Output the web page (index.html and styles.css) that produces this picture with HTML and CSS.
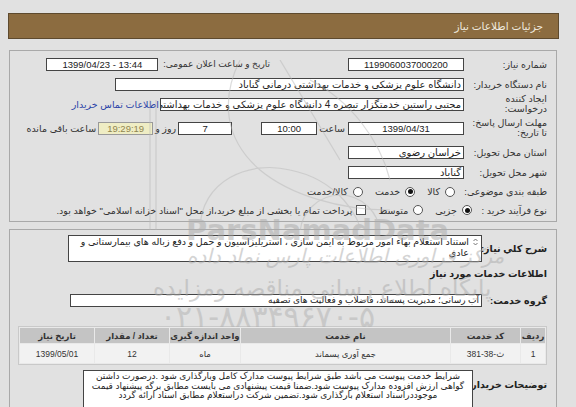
FILE: index.html
```html
<!DOCTYPE html>
<html lang="fa">
<head>
<meta charset="utf-8">
<title>جزئیات اطلاعات نیاز</title>
<link rel="stylesheet" href="styles.css">
</head>
<body>
<div class="page" dir="rtl">
  <div class="title-bar">جزئیات اطلاعات نیاز</div>

  <div class="panel panel-main">
    <div class="row r20">
      <div class="lbl">شماره نیاز:</div>
      <div class="box w114 center num">1199060037000200</div>
      <div class="lbl lbl-date">تاریخ و ساعت اعلان عمومی:</div>
      <div class="box w110 center num" dir="ltr">1399/04/23 - 13:44</div>
    </div>
    <div class="row r20">
      <div class="lbl">نام دستگاه خریدار:</div>
      <div class="box w347">دانشگاه علوم پزشکی و خدمات بهداشتی درمانی گناباد</div>
    </div>
    <div class="row r20">
      <div class="lbl two">ایجاد کننده<br>درخواست:</div>
      <div class="box w302">مجتبی راستین خدمتگزار تبصره 4 دانشگاه علوم پزشکی و خدمات بهداشتی درمانی گناباد</div>
      <a class="link" href="#">اطلاعات تماس خریدار</a>
    </div>
    <div class="row r28">
      <div class="lbl two">مهلت ارسال پاسخ:<br>تا تاریخ:</div>
      <div class="box w114 center num">1399/04/31</div>
      <div class="txt t-hour">ساعت</div>
      <div class="box w54 center num">10:00</div>
      <div class="box w52 center num days">7</div>
      <div class="txt t-days">روز و</div>
      <div class="box w53 center num timer">19:29:19</div>
      <div class="txt t-left">ساعت باقی مانده</div>
    </div>
    <div class="row r20">
      <div class="lbl">استان محل تحویل:</div>
      <div class="box w114">خراسان رضوی</div>
    </div>
    <div class="row r20">
      <div class="lbl">شهر محل تحویل:</div>
      <div class="box w114">گناباد</div>
    </div>
    <div class="row r19">
      <div class="lbl">طبقه بندی موضوعی:</div>
      <div class="opts opts-kind">
        <span class="radio"></span><span class="opt">کالا</span>
        <span class="radio on"></span><span class="opt">خدمت</span>
        <span class="radio"></span><span class="opt">کالا/خدمت</span>
      </div>
    </div>
    <div class="row r18">
      <div class="lbl lbl-narrow">نوع فرآیند خرید :</div>
      <div class="opts">
        <span class="radio on"></span><span class="opt">جزیی</span>
        <span class="radio"></span><span class="opt">متوسط</span>
        <span class="check"></span><span class="opt last">پرداخت تمام یا بخشی از مبلغ خرید،از محل "اسناد خزانه اسلامی" خواهد بود.</span>
      </div>
    </div>
  </div>

  <div class="panel panel-desc">
    <div class="row desc-row">
      <div class="blbl">شرح کلي نياز:</div>
      <div class="area">
        <svg class="spin" width="5" height="8" viewBox="0 0 5 8"><path d="M0.5 3 L2.5 1 L4.5 3 M0.5 5 L2.5 7 L4.5 5" fill="none" stroke="#555" stroke-width="0.8"/></svg>
        استناد استعلام بهاء امور مربوط به ایمن سازی ، استریلیزاسیون و حمل و دفع زباله های بیمارستانی و عادی
      </div>
    </div>
    <div class="section-title">اطلاعات خدمات مورد نياز</div>
    <div class="row group-row">
      <div class="blbl">گروه خدمت:</div>
      <div class="box w410">آب رسانی؛ مدیریت پسماند، فاضلاب و فعالیت های تصفیه</div>
    </div>
    <table class="grid">
      <thead>
        <tr>
          <th class="c-row">ردیف</th>
          <th class="c-code">کد خدمت</th>
          <th class="c-name">نام خدمت</th>
          <th class="c-unit">واحد اندازه گیری</th>
          <th class="c-qty">تعداد / مقدار</th>
          <th class="c-date">تاریخ نیاز</th>
        </tr>
      </thead>
      <tbody>
        <tr>
          <td>1</td>
          <td dir="ltr">381-38-ث</td>
          <td>جمع آوری پسماند</td>
          <td>ماه</td>
          <td>12</td>
          <td>1399/05/01</td>
        </tr>
      </tbody>
    </table>
    <div class="row notes-row">
      <div class="blbl nlbl">توضیحات خریدار:</div>
      <div class="notes">شرایط خدمت پیوست می باشد طبق شرایط پیوست مدارک کامل وبارگذاری شود .درصورت داشتن<br>گواهی ارزش افزوده مدارک پیوست شود.ضمنا قیمت پیشنهادی می بایست مطابق برگه پیشنهاد قیمت<br>موجوددراسناد استعلام بارگذاری شود.تضمین شرکت دراستعلام مطابق اسناد ارائه گردد</div>
    </div>
  </div>
</div>

<div class="watermark" aria-hidden="true">
  <svg class="wm-logo" width="260" height="170" viewBox="0 0 260 170">
    <g fill="none" stroke="#b9b9b9" stroke-width="1.2">
      <path d="M10 170 V40"/>
      <path d="M16 170 V40"/>
      <path d="M100 0 C80 40 85 80 120 110 C150 135 200 150 250 150"/>
      <path d="M60 170 C60 120 110 100 150 110 C200 120 220 160 220 170"/>
      <path d="M140 0 L200 100"/>
      <path d="M170 20 C210 40 240 80 250 120"/>
      <circle cx="200" cy="175" r="40"/>
    </g>
  </svg>
  <div class="wm-latin">ParsNamadData</div>
  <div class="wm-fa1">مرکز فراوری اطلاعات پارس نماد داده</div>
  <div class="wm-fa2">پایگاه اطلاع رسانی مناقصه ومزایده</div>
  <div class="wm-phone">۰۲۱-۸۸۳۴۹۶۷۰-۵</div>
</div>
</body>
</html>
```

FILE: styles.css
```css
html, body {
  margin: 0;
  padding: 0;
  background: #e1e1e1;
}
body {
  font-family: "Liberation Sans", "DejaVu Sans", sans-serif;
  font-size: 9.5px;
  color: #222;
  position: relative;
  min-height: 407px;
}
.page {
  width: 551px;
  margin: 13px 0 0 8px;
  position: relative;
  z-index: 1;
}
.title-bar {
  height: 24px;
  line-height: 24px;
  background: #8c6c40;
  border: 1px solid #5e4a2e;
  color: #efe9de;
  font-size: 10.5px;
  padding-right: 15px;
}
.panel {
  border: 1px solid #a9a9a9;
  margin: 11px 2px 0 1px;
  padding-right: 9px;
}
.panel-main {
  padding-top: 3px;
  padding-bottom: 2px;
}
.row {
  display: flex;
  align-items: center;
}
.r20 { height: 20px; }
.r28 { height: 28px; }
.r19 { height: 19px; }
.r18 { height: 18px; }
.lbl {
  width: 80px;
  margin-left: 3px;
  flex: none;
  color: #333;
  white-space: nowrap;
}
.lbl.two { line-height: 10px; }
.lbl-date {
  width: auto;
  margin-right: 78px;
  margin-left: 5px;
  font-size: 9px;
}
.lbl-narrow { width: 72px; }
.box {
  height: 11px;
  line-height: 11px;
  background: #fff;
  border: 1px solid #444;
  padding: 0 2px;
  white-space: nowrap;
  overflow: hidden;
  flex: none;
  box-sizing: content-box;
  color: #222;
  font-size: 10px;
}
.num { font-size: 9.5px; }
.center { text-align: center; }
.w114 { width: 110px; }
.w110 { width: 106px; }
.w347 { width: 343px; }
.w302 { width: 298px; }
.w54 { width: 50px; }
.w52 { width: 48px; }
.w53 { width: 49px; }
.w410 { width: 406px; }
.link {
  color: #2b44a8;
  text-decoration: none;
  margin-right: 1px;
  white-space: nowrap;
}
.txt { white-space: nowrap; color: #333; }
.t-hour { margin: 0 3px 0 2px; }
.days { margin-right: 29px; }
.t-days { margin: 0 2px 0 2px; }
.timer {
  background: #efedc4;
  border-color: #999;
  color: #8f8550;
}
.t-left { margin-right: 2px; }
.opts {
  display: flex;
  align-items: center;
  white-space: nowrap;
}
.opts-kind { margin-right: 9px; }
.radio {
  width: 10px;
  height: 10px;
  border: 1px solid #555;
  border-radius: 50%;
  background: #fff;
  box-sizing: border-box;
  margin-left: 5px;
  position: relative;
  flex: none;
}
.radio.on::after {
  content: "";
  position: absolute;
  left: 1.5px;
  top: 1.5px;
  width: 5px;
  height: 5px;
  border-radius: 50%;
  background: #111;
}
.check {
  width: 10px;
  height: 10px;
  border: 1px solid #555;
  background: #fff;
  box-sizing: border-box;
  margin-left: 4px;
  flex: none;
}
.opt { margin-left: 12px; color: #333; }
.opt.last { margin-left: 0; }
.panel-desc {
  margin-top: 7px;
  padding-top: 5px;
  height: 200px;
}
.blbl {
  font-weight: bold;
  width: 62px;
  margin-left: 3px;
  flex: none;
  white-space: nowrap;
  color: #222;
}
.area {
  width: 398px;
  height: 23px;
  background: #fff;
  border: 1px solid #444;
  padding: 1px 12px 1px 2px;
  line-height: 10.5px;
  position: relative;
  font-size: 9.5px;
  color: #222;
}
.spin {
  position: absolute;
  right: 3px;
  top: 2px;
}
.section-title {
  font-weight: bold;
  margin-top: 6px;
  height: 12px;
  line-height: 12px;
  color: #222;
}
.group-row {
  margin-top: 14px;
  height: 13px;
}
.group-row .box { font-size: 9px; }
.grid {
  margin-top: 19px;
  width: 527px;
  border-collapse: separate;
  border-spacing: 1px;
  background: #e9e9e9;
  border: 1px solid #c9c9c9;
  font-size: 8.5px;
  table-layout: fixed;
}
.grid th {
  background: #c4c4c4;
  height: 15px;
  font-weight: bold;
  color: #333;
  padding: 0;
}
.grid td {
  background: #f2f2f2;
  height: 19px;
  text-align: center;
  color: #333;
  padding: 0;
}
.c-row { width: 24px; }
.c-code { width: 69px; }
.c-name { width: 209px; }
.c-unit { width: 70px; }
.c-qty { width: 74px; }
.c-date { width: 74px; }
.notes-row {
  margin-top: 5px;
  align-items: flex-start;
}
.nlbl {
  width: 71px;
  margin-top: 9px;
}
.notes {
  width: 384px;
  height: 40px;
  background: #fff;
  border: 1px solid #444;
  padding: 1px 2px;
  line-height: 9.5px;
  font-size: 9px;
  text-align: center;
  white-space: nowrap;
  overflow: hidden;
  color: #222;
}
.watermark {
  position: absolute;
  left: 0;
  top: 0;
  width: 576px;
  height: 407px;
  pointer-events: none;
  z-index: 2;
  opacity: 0.5;
}
.wm-logo {
  position: absolute;
  left: 140px;
  top: 60px;
}
.wm-latin {
  position: absolute;
  left: 186px;
  top: 213px;
  font-family: "DejaVu Sans", sans-serif;
  font-weight: bold;
  font-size: 29px;
  color: #a9a9a9;
}
.wm-fa1 {
  position: absolute;
  left: 187px;
  top: 244px;
  font-family: "DejaVu Sans", sans-serif;
  font-size: 20px;
  line-height: 24px;
  color: #aaaaaa;
  font-style: italic;
  direction: rtl;
  white-space: nowrap;
}
.wm-fa2 {
  position: absolute;
  left: 153px;
  top: 276px;
  font-family: "DejaVu Sans", sans-serif;
  font-size: 23px;
  line-height: 24px;
  color: #aaaaaa;
  direction: rtl;
  white-space: nowrap;
}
.wm-phone {
  position: absolute;
  left: 160px;
  top: 301px;
  font-family: "DejaVu Sans", sans-serif;
  font-size: 30px;
  line-height: 32px;
  color: #b0b0b0;
  direction: ltr;
  white-space: nowrap;
}
```
